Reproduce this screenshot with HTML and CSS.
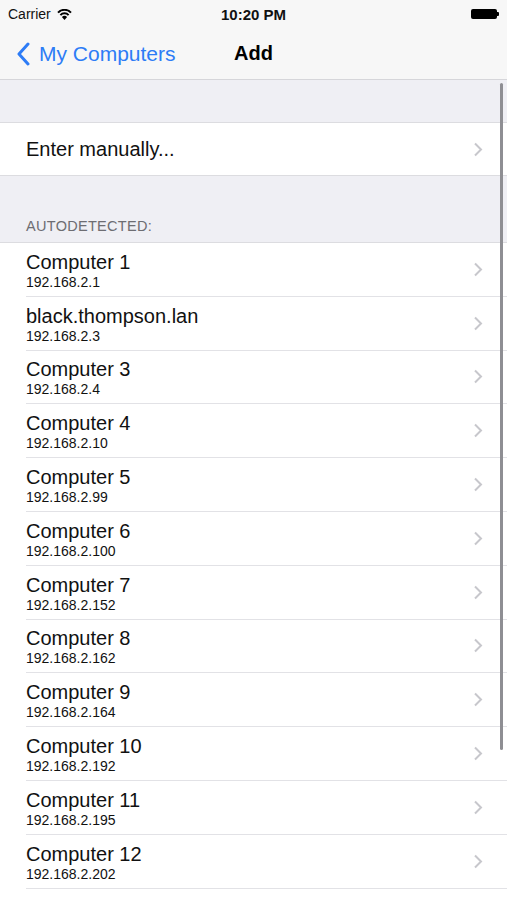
FILE: index.html
```html
<!DOCTYPE html>
<html lang="en">
<head>
  <meta charset="UTF-8">
  <meta name="viewport" content="width=device-width, initial-scale=1.0">
  <title>Add</title>
  <link rel="stylesheet" href="styles.css">
</head>
<body>
  <div class="screen">
    <header class="top">
      <div class="status-bar">
        <div class="carrier">
          Carrier
          <svg class="wifi" width="15" height="11" viewBox="0 0 15 11">
            <path d="M7.5 11 L4.9 8.1 A3.7 3.7 0 0 1 10.1 8.1 Z" fill="#000"/>
            <path d="M1 3.6 A9 9 0 0 1 14 3.6" stroke="#000" stroke-width="2" fill="none"/>
            <path d="M3.4 6.1 A5.6 5.6 0 0 1 11.6 6.1" stroke="#000" stroke-width="2" fill="none"/>
          </svg>
        </div>
        <div class="time">10:20 PM</div>
        <div class="battery"><span class="battery-body"></span><span class="battery-nub"></span></div>
      </div>
      <nav class="nav-bar">
        <a class="back" href="#">
          <svg width="14" height="24" viewBox="0 0 14 24">
            <polyline points="12,2 3,12 12,22" fill="none" stroke="#2d7cf6" stroke-width="3" stroke-linecap="round" stroke-linejoin="round"/>
          </svg>
          My Computers
        </a>
        <div class="nav-title">Add</div>
      </nav>
    </header>

    <div class="group-gap"></div>
    <div class="group">
      <div class="cell single">
        <div class="cell-body">
          <span class="cell-label">Enter manually...</span>
          <svg class="chevron" width="10" height="15" viewBox="0 0 10 15"><polyline points="2,1.5 8,7.5 2,13.5" fill="none" stroke="#c7c7cc" stroke-width="2"/></svg>
        </div>
      </div>
    </div>

    <div class="section-header">AUTODETECTED:</div>
    <div class="group" id="computer-list"></div>

    <div class="scroll-indicator"></div>
  </div>

  <script>
    const computers = [
      ["Computer 1", "192.168.2.1"],
      ["black.thompson.lan", "192.168.2.3"],
      ["Computer 3", "192.168.2.4"],
      ["Computer 4", "192.168.2.10"],
      ["Computer 5", "192.168.2.99"],
      ["Computer 6", "192.168.2.100"],
      ["Computer 7", "192.168.2.152"],
      ["Computer 8", "192.168.2.162"],
      ["Computer 9", "192.168.2.164"],
      ["Computer 10", "192.168.2.192"],
      ["Computer 11", "192.168.2.195"],
      ["Computer 12", "192.168.2.202"],
      ["Computer 13", "192.168.2.210"]
    ]

    const list = document.getElementById("computer-list")

    computers.forEach(([name, ip]) => {
      list.innerHTML += `<div class="cell">
          <div class="cell-body">
            <div class="cell-text">
              <div class="cell-title">${name}</div>
              <div class="cell-subtitle">${ip}</div>
            </div>
            <svg class="chevron" width="10" height="15" viewBox="0 0 10 15"><polyline points="2,1.5 8,7.5 2,13.5" fill="none" stroke="#c7c7cc" stroke-width="2"/></svg>
          </div>
        </div>`
    })
  </script>
</body>
</html>
```

FILE: styles.css
```css
html {
  font-family: "Liberation Sans", Arial, sans-serif;
}

body {
  margin: 0;
  background: #efeff4;
}

.screen {
  position: relative;
  height: 900px;
  overflow: hidden;
}

.top {
  background: #f7f7f7;
  border-bottom: 1px solid #d6d6da;
}

.status-bar {
  display: flex;
  align-items: center;
  justify-content: space-between;
  height: 28px;
  padding: 0 8px;
  font-size: 14px;
  color: #111;
}
.carrier {
  flex: 1;
  display: flex;
  align-items: center;
  gap: 6px;
}
.time {
  font-weight: bold;
  font-size: 15px;
}
.battery {
  flex: 1;
  display: flex;
  align-items: center;
  justify-content: flex-end;
}
.battery-body {
  width: 26px;
  height: 10px;
  background: #000;
  border-radius: 2px;
}
.battery-nub {
  width: 2px;
  height: 4px;
  background: #000;
  border-radius: 0 1px 1px 0;
}

.nav-bar {
  position: relative;
  display: flex;
  align-items: center;
  height: 51px;
  padding-left: 16px;
}
.back {
  display: flex;
  align-items: center;
  gap: 9px;
  color: #2d7cf6;
  font-size: 21px;
  text-decoration: none;
}
.nav-title {
  position: absolute;
  left: 0;
  right: 0;
  text-align: center;
  font-weight: bold;
  font-size: 20px;
  pointer-events: none;
}

.group-gap {
  height: 42px;
}

.group {
  background: #fff;
  border-top: 1px solid #dcdce0;
  border-bottom: 1px solid #dcdce0;
}

.cell {
  padding-left: 26px;
}
.cell-body {
  display: flex;
  align-items: center;
  justify-content: space-between;
  box-sizing: border-box;
  height: 53.8px;
  padding-right: 24px;
  border-bottom: 1px solid #e2e2e6;
}
.cell:last-child .cell-body, .single .cell-body {
  border-bottom: none;
}
.single .cell-body {
  height: 52px;
}
.cell-label {
  font-size: 20px;
  color: #111;
}
.cell-text {
  padding-top: 3px;
  color: #111;
}
.cell-title {
  font-size: 20px;
  line-height: 20px;
}
.cell-subtitle {
  margin-top: 2px;
  font-size: 14px;
  line-height: 16px;
}
.chevron {
  flex-shrink: 0;
}

.section-header {
  height: 66px;
  box-sizing: border-box;
  padding: 42px 26px 0;
  font-size: 14.5px;
  letter-spacing: 0.3px;
  color: #6d6d72;
}

.scroll-indicator {
  position: absolute;
  top: 83px;
  right: 4px;
  width: 3px;
  height: 667px;
  border-radius: 2px;
  background: #8e8e93;
}
```
